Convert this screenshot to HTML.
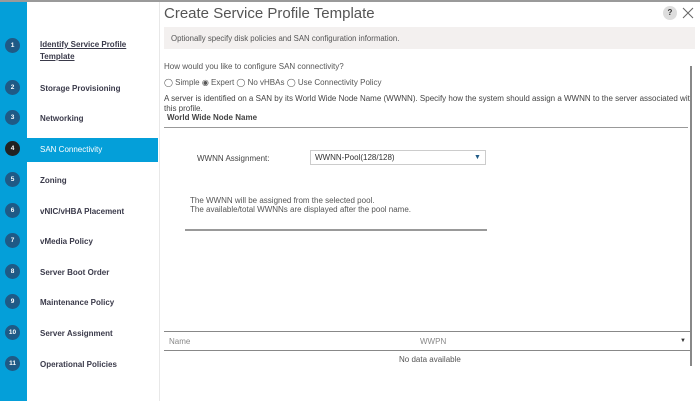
<!DOCTYPE html>
<html><head><style>
*{margin:0;padding:0;box-sizing:border-box}
body{width:700px;height:401px;background:#fff;font-family:"Liberation Sans",sans-serif;position:relative;overflow:hidden;color:#333}
.top{position:absolute;left:0;top:0;width:700px;height:2px;background:#9a9a9a}
.strip{position:absolute;left:0;top:2px;width:27px;height:399px;background:#049fd9}
.side{position:absolute;left:27px;top:2px;width:131px;height:399px;background:#fff}
.vl{position:absolute;left:159px;top:2px;width:1px;height:399px;background:#e8e8e8}
.step{position:absolute;left:0;width:158px;height:24px}
.num{position:absolute;left:5px;top:4px;width:15px;height:15px;border-radius:50%;background:#1f5a86;color:#fff;font-size:6.5px;font-weight:bold;text-align:center;line-height:15px}
.lab{position:absolute;left:40px;font-size:8px;font-weight:bold;color:#3a3a4a}
.sel{position:absolute;left:27px;top:138px;width:131px;height:24px;background:#049fd9}
.t{position:absolute;white-space:nowrap}
</style></head><body>
<div class="top"></div>
<div class="strip"></div>
<div class="side"></div>
<div class="sel"></div>
<div class="vl"></div>

<div class="step" style="top:34px"><div class="num">1</div><div class="lab" style="top:5px;text-decoration:underline;line-height:12px">Identify Service Profile<br>Template</div></div>
<div class="step" style="top:76px"><div class="num">2</div><div class="lab" style="top:8px">Storage Provisioning</div></div>
<div class="step" style="top:106px"><div class="num">3</div><div class="lab" style="top:8px">Networking</div></div>
<div class="step" style="top:137px"><div class="num" style="background:#222">4</div><div class="lab" style="top:8px;color:#fff;font-weight:normal">SAN Connectivity</div></div>
<div class="step" style="top:168px"><div class="num">5</div><div class="lab" style="top:8px">Zoning</div></div>
<div class="step" style="top:199px"><div class="num">6</div><div class="lab" style="top:8px">vNIC/vHBA Placement</div></div>
<div class="step" style="top:229px"><div class="num">7</div><div class="lab" style="top:8px">vMedia Policy</div></div>
<div class="step" style="top:260px"><div class="num">8</div><div class="lab" style="top:8px">Server Boot Order</div></div>
<div class="step" style="top:290px"><div class="num">9</div><div class="lab" style="top:8px">Maintenance Policy</div></div>
<div class="step" style="top:321px"><div class="num">10</div><div class="lab" style="top:8px">Server Assignment</div></div>
<div class="step" style="top:352px"><div class="num">11</div><div class="lab" style="top:8px">Operational Policies</div></div>

<div class="t" style="left:164px;top:5px;font-size:15px;color:#555">Create Service Profile Template</div>
<div style="position:absolute;left:663px;top:6px;width:14px;height:14px;border-radius:50%;background:#ddd;font-size:8px;font-weight:bold;text-align:center;line-height:14px;color:#333">?</div>
<svg style="position:absolute;left:682px;top:7px" width="12" height="12" viewBox="0 0 12 12"><path d="M1 1L11 11M11 1L1 11" stroke="#666" stroke-width="1"/></svg>
<div style="position:absolute;left:164px;top:27px;width:531px;height:22px;background:#f3f0ef"></div>
<div class="t" style="left:171px;top:34px;font-size:7.8px;color:#555">Optionally specify disk policies and SAN configuration information.</div>

<div class="t" style="left:164px;top:62px;font-size:8px;color:#555">How would you like to configure SAN connectivity?</div>
<div class="t" style="left:164px;top:78px;font-size:8px;color:#555">◯ Simple ◉ Expert ◯ No vHBAs ◯ Use Connectivity Policy</div>
<div class="t" style="left:164px;top:94px;font-size:8px;color:#444">A server is identified on a SAN by its World Wide Node Name (WWNN). Specify how the system should assign a WWNN to the server associated wit</div>
<div class="t" style="left:164px;top:104px;font-size:8px;color:#444">this profile.</div>
<div class="t" style="left:167px;top:113px;font-size:8px;color:#444;font-weight:bold">World Wide Node Name</div>
<div style="position:absolute;left:164px;top:127px;width:524px;height:1px;background:#999"></div>
<div style="position:absolute;left:690px;top:66px;width:2px;height:300px;background:#888"></div>

<div class="t" style="left:197px;top:154px;font-size:8px;color:#444">WWNN Assignment:</div>
<div style="position:absolute;left:310px;top:150px;width:176px;height:15px;border:1px solid #ccc"></div>
<div class="t" style="left:315px;top:153px;font-size:8px;color:#333">WWNN-Pool(128/128)</div>
<div class="t" style="left:474px;top:154px;font-size:7px;color:#1f5a86">▼</div>

<div class="t" style="left:190px;top:196px;font-size:8px;color:#555">The WWNN will be assigned from the selected pool.</div>
<div class="t" style="left:190px;top:205px;font-size:8px;color:#555">The available/total WWNNs are displayed after the pool name.</div>
<div style="position:absolute;left:185px;top:229px;width:302px;height:2px;background:#999"></div>

<div style="position:absolute;left:164px;top:331px;width:526px;height:1px;background:#888"></div>
<div class="t" style="left:169px;top:337px;font-size:8px;color:#888">Name</div>
<div class="t" style="left:420px;top:337px;font-size:8px;color:#888">WWPN</div>
<div class="t" style="left:680px;top:338px;font-size:6px;color:#333">▼</div>
<div style="position:absolute;left:164px;top:350px;width:526px;height:1px;background:#888"></div>
<div class="t" style="left:399px;top:355px;font-size:8px;color:#555">No data available</div>
</body></html>
